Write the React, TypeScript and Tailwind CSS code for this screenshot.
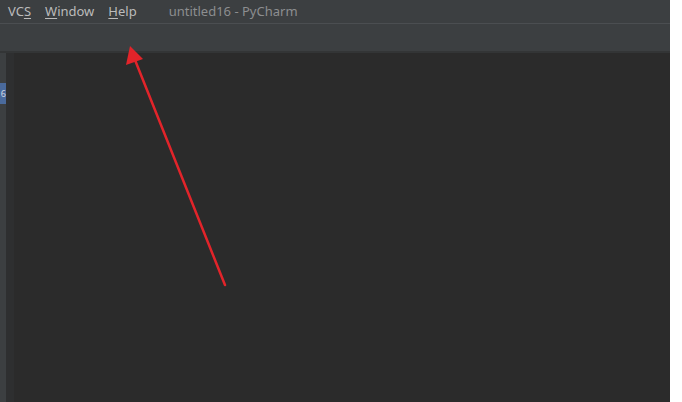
import React from "react";

const MenuItem = ({ label, mnemonic }: { label: string; mnemonic: number }) => (
  <span className="mr-[14px]">
    {label.slice(0, mnemonic)}
    <span className="underline underline-offset-2">{label[mnemonic]}</span>
    {label.slice(mnemonic + 1)}
  </span>
);

const App = () => {
  return (
    <div className="relative w-[682px] h-[402px] flex bg-white overflow-hidden font-['Noto_Sans',sans-serif]">
      <div className="w-[670px] h-full flex flex-col bg-[#2b2b2b]">
        {/* menu bar */}
        <div className="h-[24px] flex items-center pl-[8px] bg-[#3c3f41] border-b border-[#4b4e51] text-[13px] text-[#bbbbbb]">
          <MenuItem label="VCS" mnemonic={2} />
          <MenuItem label="Window" mnemonic={0} />
          <MenuItem label="Help" mnemonic={0} />
          <span className="ml-[18px] text-[#8c8e90]">untitled16 - PyCharm</span>
        </div>
        {/* toolbar */}
        <div className="h-[29px] bg-[#3c3f41] border-b-2 border-[#333536]" />
        {/* body */}
        <div className="flex-1 flex">
          <div className="w-[6px] bg-[#3c3f41] flex flex-col pt-[30px]">
            <div className="h-[21px] bg-[#4a6a9c] flex items-center justify-end text-[9px] text-[#d0d6e0] leading-none overflow-hidden">
              6
            </div>
          </div>
          <div className="w-[8px] bg-[#2e2f30]" />
          <div className="flex-1 bg-[#2b2b2b]" />
        </div>
      </div>
      {/* annotation arrow */}
      <svg className="absolute left-0 top-0" width="682" height="402" viewBox="0 0 682 402">
        <line x1="225" y1="285" x2="135" y2="60" stroke="#e2242a" strokeWidth="2.5" strokeLinecap="round" />
        <polygon points="130,46 126,65 143,59" fill="#e2242a" />
      </svg>
    </div>
  );
};

export default App;
